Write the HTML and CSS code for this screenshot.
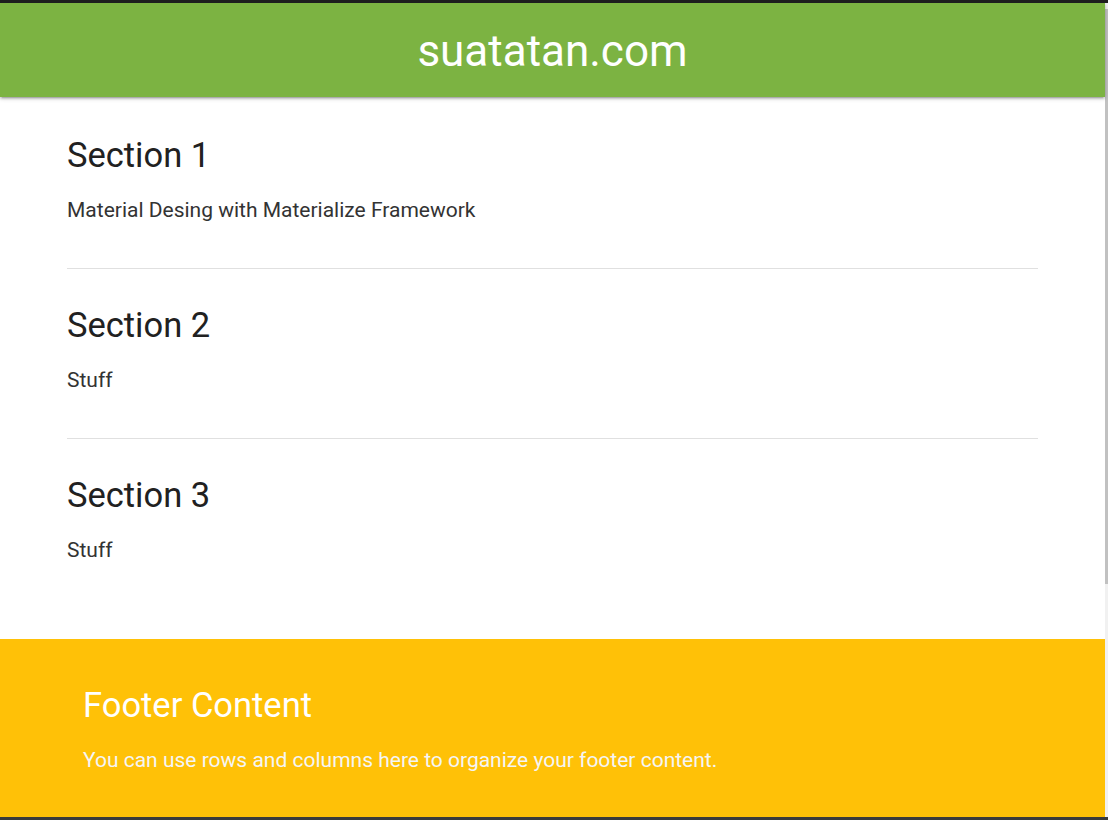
FILE: index.html
```html
<!DOCTYPE html>
<html lang="en">
<head>
<meta charset="utf-8">
<title>suatatan.com</title>
<link rel="stylesheet" href="styles.css">
</head>
<body>
<div class="frame">
  <div class="page">
    <header class="nav">
      <span class="brand">suatatan.com</span>
    </header>
    <main class="content">
      <section class="section">
        <h5 class="section-title">Section 1</h5>
        <p class="section-text">Material Desing with Materialize Framework</p>
      </section>
      <div class="divider"></div>
      <section class="section">
        <h5 class="section-title">Section 2</h5>
        <p class="section-text">Stuff</p>
      </section>
      <div class="divider"></div>
      <section class="section">
        <h5 class="section-title">Section 3</h5>
        <p class="section-text">Stuff</p>
      </section>
    </main>
    <footer class="footer">
      <h5 class="footer-title">Footer Content</h5>
      <p class="footer-text">You can use rows and columns here to organize your footer content.</p>
    </footer>
  </div>
  <div class="scrollbar"><div class="thumb"></div></div>
</div>
</body>
</html>
```

FILE: styles.css
```css
html, body {
  margin: 0;
  padding: 0;
  height: 100%;
  background: #ffffff;
}

body {
  font-family: Roboto, "Liberation Sans", sans-serif;
  color: rgba(0, 0, 0, 0.87);
}

.frame {
  display: flex;
  height: 820px;
  box-sizing: border-box;
  border-top: 3px solid #1e1e1e;
  border-bottom: 3px solid #3a3a3a;
  overflow: hidden;
}

.page {
  flex: 1;
  display: flex;
  flex-direction: column;
  min-width: 0;
}

.scrollbar {
  width: 3px;
  background: #f1f1f1;
  padding-top: 6px;
}

.thumb {
  height: 575px;
  background: #c1c1c1;
}

.nav {
  height: 94px;
  background: #7cb342;
  display: flex;
  align-items: center;
  justify-content: center;
  box-shadow: 0 2px 2px 0 rgba(0,0,0,0.14), 0 3px 1px -2px rgba(0,0,0,0.12), 0 1px 5px 0 rgba(0,0,0,0.2);
  position: relative;
  z-index: 1;
}

.brand {
  color: #ffffff;
  font-size: 44px;
  line-height: 44px;
  padding-top: 2px;
}

.content {
  flex: 1;
  padding: 2px 67px 0;
}

.section {
  padding: 34px 0 44px;
}

.section-title {
  margin: 0;
  font-size: 34.5px;
  font-weight: 400;
  line-height: 44px;
  color: #212121;
}

.section-text {
  margin: 19px 0 0;
  font-size: 21px;
  font-weight: 400;
  line-height: 28px;
  color: #333333;
}

.divider {
  height: 1px;
  background: #e0e0e0;
}

.footer {
  height: 178px;
  box-sizing: border-box;
  background: #ffc107;
  padding: 44px 0 0 83px;
}

.footer-title {
  margin: 0;
  font-size: 34.5px;
  font-weight: 400;
  line-height: 44px;
  color: #ffffff;
}

.footer-text {
  margin: 19px 0 0;
  font-size: 21px;
  font-weight: 400;
  line-height: 28px;
  color: #f5f5f5;
}
```
